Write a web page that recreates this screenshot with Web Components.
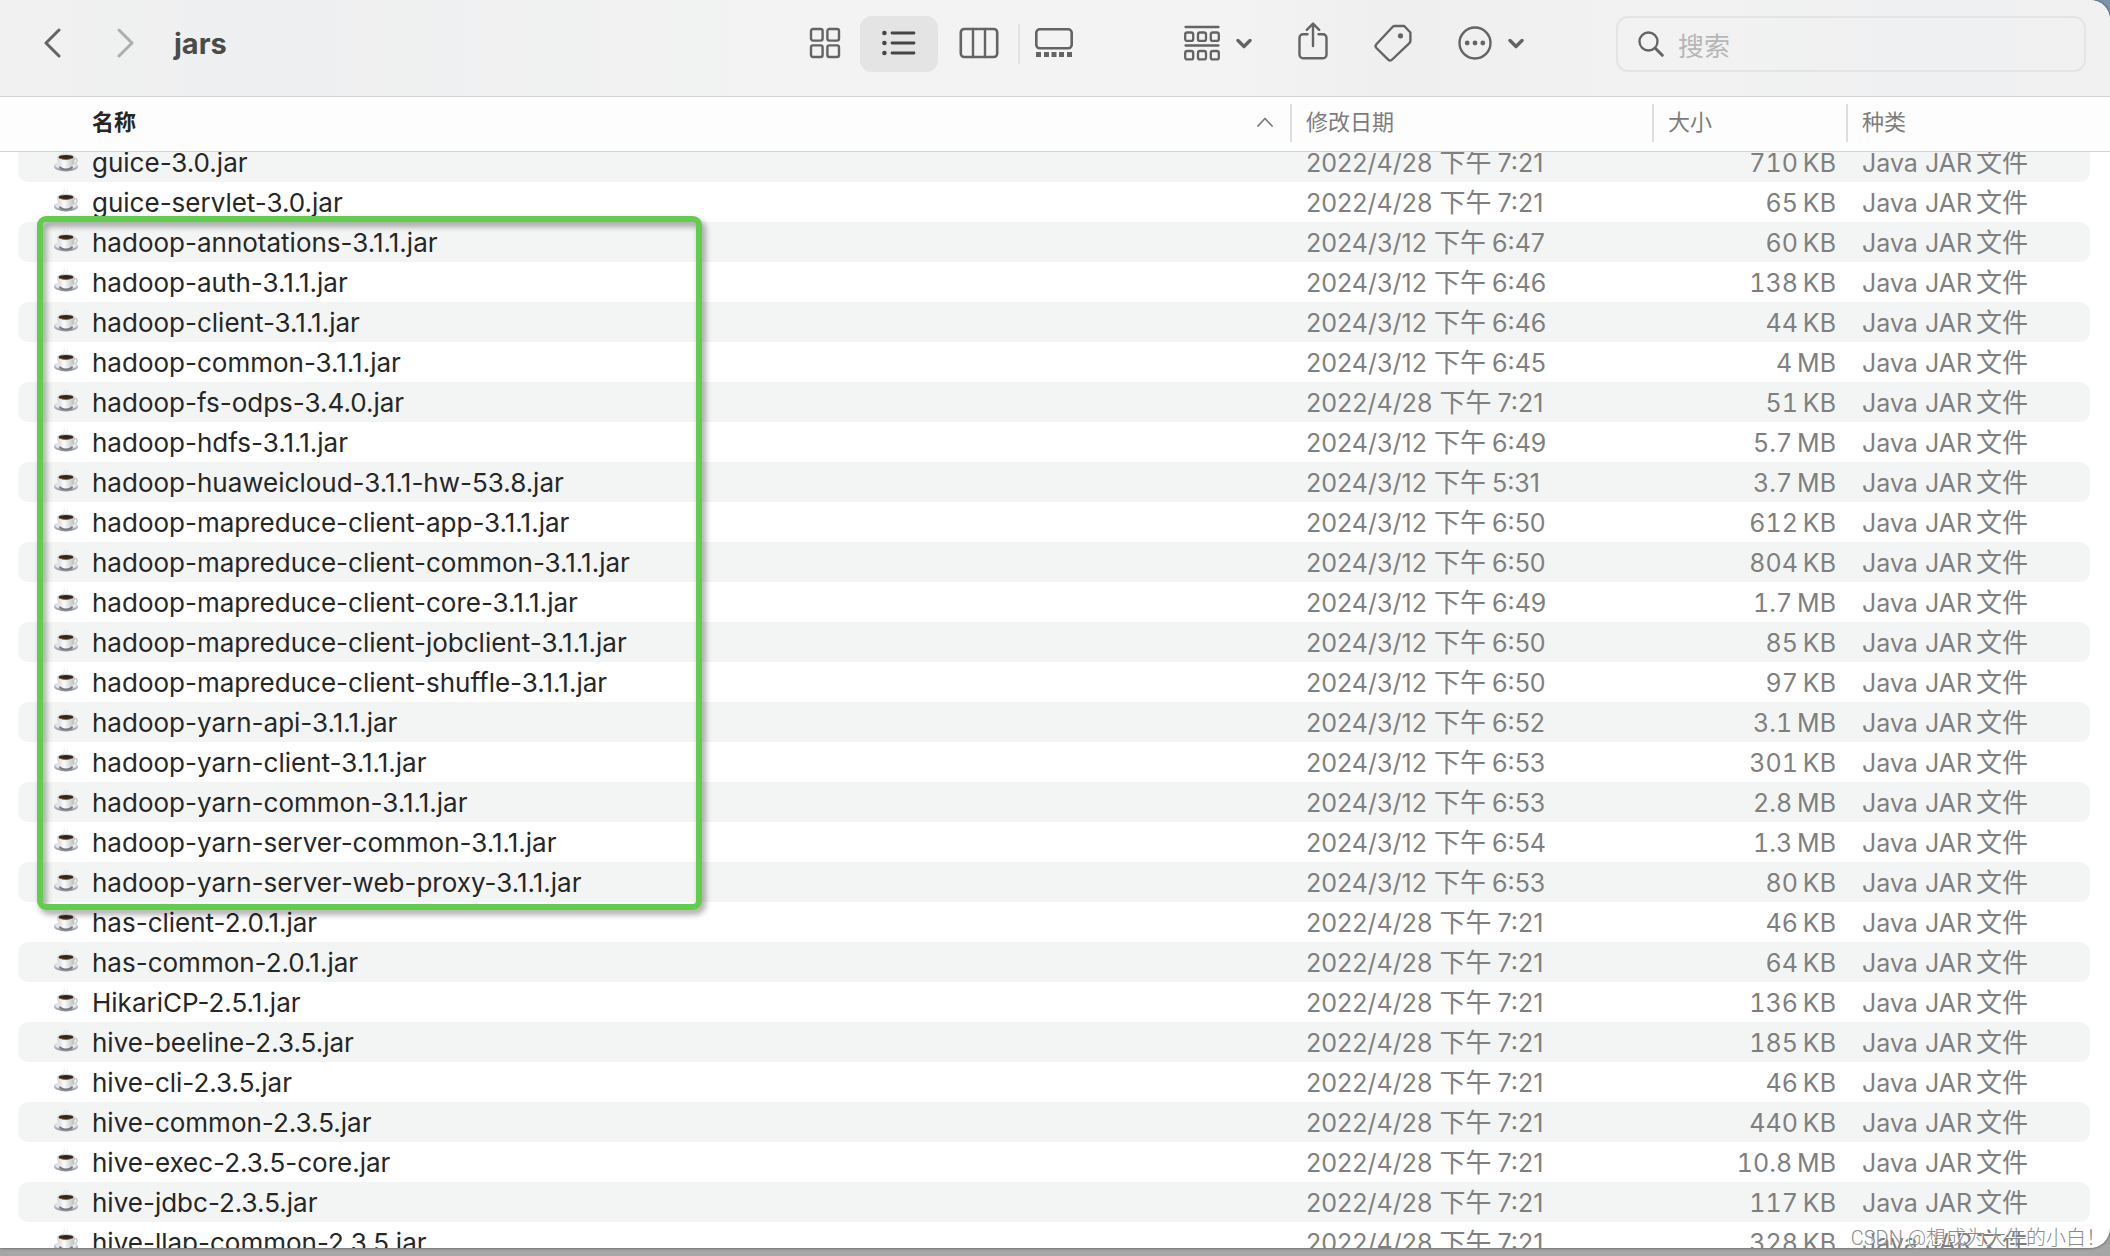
<!DOCTYPE html>
<html lang="zh-CN">
<head>
<meta charset="utf-8">
<title>jars</title>
<style>
  html, body { height: 100%; margin: 0; }
  body {
    background: linear-gradient(to bottom, #7a96a8 0 50%, #a6a6a6 50%);
    font-family: Inter, "Noto Sans CJK SC", sans-serif;
    overflow: hidden;
  }
</style>
</head>
<body>
<finder-window>
  <finder-toolbar slot="toolbar" heading="jars"></finder-toolbar>
  <file-list slot="content"></file-list>
  <page-watermark slot="overlay">CSDN @想成为大牛的小白！</page-watermark>
</finder-window>

<script>
const define = (name, html, setup) => {
  const template = document.createElement('template');
  template.innerHTML = html;
  customElements.define(name, class extends HTMLElement {
    connectedCallback() {
      if (this.shadowRoot) return;
      const root = this.attachShadow({ mode: 'open' });
      root.append(template.content.cloneNode(true));
      if (setup) setup(this, root);
    }
  });
};

define('finder-window', `
  <style>
    :host { display: flex; flex-direction: column; box-sizing: border-box; height: 100vh; padding-bottom: 8px; position: relative; }
    .window { flex: 1; min-height: 0; display: flex; flex-direction: column; background: #fff; border-radius: 0 20px 20px 0; overflow: hidden; box-shadow: 0 0 3px rgba(0,0,0,.6); }
    ::slotted([slot=content]) { flex: 1; min-height: 0; }
  </style>
  <div class="window"><slot name="toolbar"></slot><slot name="content"></slot></div>
  <slot name="overlay"></slot>`);

define('page-watermark', `
  <style>
    :host { position: absolute; right: 4px; bottom: 4px; font: 300 20px/28px Roboto, "Noto Sans CJK SC", sans-serif; color: #8c8c8c; text-shadow: -1px -1px 0 #fff; white-space: nowrap; }
  </style><slot></slot>`);

/* Toolbar glyphs, drawn in device pixels */
const GLYPHS = {
  back: [18, 30, '<path d="M16 2 3 15l13 13" stroke-width="3"/>'],
  forward: [18, 30, '<path d="M2 2l13 13L2 28" stroke-width="3"/>'],
  grid: [32, 32, '<g stroke-width="2.4"><rect x="2" y="2" width="11.6" height="11.6" rx="2"/><rect x="18.4" y="2" width="11.6" height="11.6" rx="2"/><rect x="2" y="18.4" width="11.6" height="11.6" rx="2"/><rect x="18.4" y="18.4" width="11.6" height="11.6" rx="2"/></g>'],
  list: [34, 26, '<g stroke-width="2.8"><path d="M10 3h22M10 13h22M10 23h22"/></g><g fill="currentColor" stroke="none"><circle cx="2.4" cy="3" r="2.3"/><circle cx="2.4" cy="13" r="2.3"/><circle cx="2.4" cy="23" r="2.3"/></g>'],
  columns: [40, 32, '<rect x="1.8" y="2" width="36.4" height="28" rx="3.5" stroke-width="2.6"/><path d="M14 2v28M26 2v28" stroke-width="2.4"/>'],
  gallery: [38, 30, '<rect x="1.3" y="1.3" width="35.4" height="19" rx="3.5" stroke-width="2.6"/><g fill="currentColor" stroke="none"><rect x="1" y="24" width="5" height="5"/><rect x="9" y="24" width="5" height="5"/><rect x="16.500" y="24" width="5" height="5"/><rect x="24" y="24" width="5" height="5"/><rect x="32" y="24" width="5" height="5"/></g>'],
  group: [36, 36, '<g stroke-width="2.3"><path d="M1.500 2h33M1.500 20.500h33"/><rect x="1.200" y="7.500" width="8" height="8.400" rx="2"/><rect x="14" y="7.500" width="8" height="8.400" rx="2"/><rect x="26.800" y="7.500" width="8" height="8.400" rx="2"/><rect x="1.200" y="26" width="8" height="8.400" rx="2"/><rect x="14" y="26" width="8" height="8.400" rx="2"/><rect x="26.800" y="26" width="8" height="8.400" rx="2"/></g>'],
  down: [16, 11, '<path d="M2 2.500l6 6 6-6" stroke-width="3.4"/>'],
  share: [30, 42, '<g stroke-width="2.400"><path d="M9.500 12.300H5a3.500 3.500 0 0 0-3.500 3.500v17A3.500 3.500 0 0 0 5 36.300h20a3.500 3.500 0 0 0 3.500-3.500v-17a3.500 3.500 0 0 0-3.500-3.500h-4.500M15 24V2M8.800 7.800 15 1.600l6.200 6.200"/></g>'],
  tag: [38, 38, '<path d="M20.500 2h9.700l6.200 6.500v8.300c0 1-.4 1.700-1 2.400L18.200 35.500c-1.400 1.400-2.700 1.400-4 .1L2.400 24c-1.300-1.400-1.300-2.400 0-3.700L18.500 3c.6-.6 1.200-1 2-1Z" stroke-width="2.400"/><circle cx="26.500" cy="11.800" r="2.600" fill="currentColor" stroke="none"/>'],
  more: [34, 34, '<circle cx="17" cy="17" r="15.500" stroke-width="2.400"/><g fill="currentColor" stroke="none"><circle cx="9.200" cy="17" r="2.400"/><circle cx="17" cy="17" r="2.400"/><circle cx="24.800" cy="17" r="2.400"/></g>'],
  search: [26, 26, '<circle cx="10.500" cy="10.500" r="9" stroke-width="2.300"/><path d="m17.300 17.300 7 7" stroke-width="3"/>'],
  up: [16, 10, '<path d="M1 9l7-7.500L15 9" stroke-width="1.800"/>'],
};
define('finder-glyph', `
  <style>:host { display: inline-flex; flex: none; } svg { display: block; }</style>
  <svg fill="none" stroke="currentColor" stroke-linecap="round" stroke-linejoin="round" aria-hidden="true"></svg>`,
  (host, root) => {
    const [w, h, body] = GLYPHS[host.getAttribute('name')];
    const svg = root.querySelector('svg');
    svg.setAttribute('width', w);
    svg.setAttribute('height', h);
    svg.setAttribute('viewBox', `0 0 ${w} ${h}`);
    svg.innerHTML = body;
  });

define('finder-toolbar', `
  <style>
    :host { display: flex; align-items: center; flex: none; box-sizing: border-box; height: 97px; padding: 0 24px 8px 34px; background: linear-gradient(90deg, #f1f1f1, #eeeff0 12%, #f3f3f3 40%, #f3f3f3 58%, #efefef 66%, #f2f2f2 78%, #eff0f1 92%, #f1f1f1); border-bottom: 1px solid #d2d2d2; color: #646464; }
    button { display: flex; align-items: center; justify-content: center; gap: 16px; box-sizing: border-box; height: 56px; margin: 0; padding: 0 0 2px; border: 0; border-radius: 12px; background: none; color: inherit; font: inherit; }
    .lead { flex: 1; display: flex; align-items: center; }
    .nav { display: flex; gap: 38px; }
    .nav button { width: 36px; }
    .nav button:disabled { color: #adadad; }
    h1 { margin: 0 0 0 30px; font-size: 29px; line-height: 40px; font-weight: 700; color: #4b4b4b; }
    .views { display: flex; align-items: center; }
    .views button { width: 78px; }
    .views button:first-child { width: 70px; }
    .views button:last-child { width: 68px; }
    .views [aria-pressed=true] { margin-right: 2px; background: #e4e4e4; color: #444; }
    .views i { width: 2px; height: 40px; background: #e3e3e3; }
    .actions { display: flex; align-items: center; gap: 46px; margin: 0 92px 0 96px; }
    label { box-sizing: border-box; display: flex; align-items: center; gap: 14px; width: 470px; height: 56px; padding: 0 20px; border: 2px solid #e4e4e4; border-radius: 12px; }
    input { flex: 1; min-width: 0; border: 0; padding: 6px 0 0; background: none; outline: 0; font: 26px/36px Inter, "Noto Sans CJK SC", sans-serif; color: #333; }
    input::placeholder { color: #b6b6b6; opacity: 1; }
  </style>
  <div class="lead">
    <div class="nav">
      <button aria-label="返回"><finder-glyph name="back"></finder-glyph></button>
      <button aria-label="前进" disabled><finder-glyph name="forward"></finder-glyph></button>
    </div>
    <h1></h1>
  </div>
  <div class="views">
    <button aria-label="图标"><finder-glyph name="grid"></finder-glyph></button>
    <button aria-label="列表" aria-pressed="true"><finder-glyph name="list"></finder-glyph></button>
    <button aria-label="分栏"><finder-glyph name="columns"></finder-glyph></button>
    <i></i>
    <button aria-label="画廊"><finder-glyph name="gallery"></finder-glyph></button>
  </div>
  <div class="actions">
    <button aria-label="群组"><finder-glyph name="group"></finder-glyph><finder-glyph name="down"></finder-glyph></button>
    <button aria-label="共享"><finder-glyph name="share"></finder-glyph></button>
    <button aria-label="标签"><finder-glyph name="tag"></finder-glyph></button>
    <button aria-label="更多"><finder-glyph name="more"></finder-glyph><finder-glyph name="down"></finder-glyph></button>
  </div>
  <label><finder-glyph name="search"></finder-glyph><input type="text" placeholder="搜索" aria-label="搜索"></label>`,
  (host, root) => { root.querySelector('h1').textContent = host.getAttribute('heading'); });

define('java-cup', `
  <style>:host { display: inline-flex; flex: none; } svg { display: block; }</style>
  <svg width="26" height="28" viewBox="0 0 26 28" aria-hidden="true">
    <defs>
      <linearGradient id="cup" x1="0" x2="1"><stop offset="0" stop-color="#d4d4d6"/><stop offset=".4" stop-color="#fbfbfb"/><stop offset="1" stop-color="#b9babd"/></linearGradient>
      <linearGradient id="dish" x1="0" x2="0" y1="0" y2="1"><stop offset="0" stop-color="#dfe1e5"/><stop offset="1" stop-color="#8d929b"/></linearGradient>
    </defs>
    <path d="M11 6c-2-2 1.500-3 0-6M14 6c-1.500-2 1-3 0-5" fill="none" stroke="#d9d9d9" stroke-opacity=".7"/>
    <ellipse cx="13" cy="17.500" rx="12" ry="5" fill="url(#dish)"/>
    <ellipse cx="13" cy="16.600" rx="10.800" ry="3.800" fill="#e4e5e8"/>
    <ellipse cx="13" cy="18.600" rx="7" ry="2.800" fill="#777c84"/>
    <path d="M20.500 9.500c5-1.200 5 5.500-1.500 5" fill="none" stroke="#c9cacd" stroke-width="1.600"/>
    <path d="M4 8c0 6 2.800 11.500 9 11.500S22 14 22 8Z" fill="url(#cup)"/>
    <ellipse cx="13" cy="8" rx="9" ry="3.200" fill="#d8d8da"/>
    <ellipse cx="13" cy="8.200" rx="7.400" ry="2.300" fill="#33241d"/>
    <path d="M7.500 9.300c3 1.500 8 1.500 11 0" fill="none" stroke="#8a5a35" stroke-width=".8"/>
  </svg>`);

/* name | date | time | size */
const FILES = `guice-3.0|2022/4/28|7:21|710 KB
guice-servlet-3.0|2022/4/28|7:21|65 KB
hadoop-annotations-3.1.1|2024/3/12|6:47|60 KB
hadoop-auth-3.1.1|2024/3/12|6:46|138 KB
hadoop-client-3.1.1|2024/3/12|6:46|44 KB
hadoop-common-3.1.1|2024/3/12|6:45|4 MB
hadoop-fs-odps-3.4.0|2022/4/28|7:21|51 KB
hadoop-hdfs-3.1.1|2024/3/12|6:49|5.7 MB
hadoop-huaweicloud-3.1.1-hw-53.8|2024/3/12|5:31|3.7 MB
hadoop-mapreduce-client-app-3.1.1|2024/3/12|6:50|612 KB
hadoop-mapreduce-client-common-3.1.1|2024/3/12|6:50|804 KB
hadoop-mapreduce-client-core-3.1.1|2024/3/12|6:49|1.7 MB
hadoop-mapreduce-client-jobclient-3.1.1|2024/3/12|6:50|85 KB
hadoop-mapreduce-client-shuffle-3.1.1|2024/3/12|6:50|97 KB
hadoop-yarn-api-3.1.1|2024/3/12|6:52|3.1 MB
hadoop-yarn-client-3.1.1|2024/3/12|6:53|301 KB
hadoop-yarn-common-3.1.1|2024/3/12|6:53|2.8 MB
hadoop-yarn-server-common-3.1.1|2024/3/12|6:54|1.3 MB
hadoop-yarn-server-web-proxy-3.1.1|2024/3/12|6:53|80 KB
has-client-2.0.1|2022/4/28|7:21|46 KB
has-common-2.0.1|2022/4/28|7:21|64 KB
HikariCP-2.5.1|2022/4/28|7:21|136 KB
hive-beeline-2.3.5|2022/4/28|7:21|185 KB
hive-cli-2.3.5|2022/4/28|7:21|46 KB
hive-common-2.3.5|2022/4/28|7:21|440 KB
hive-exec-2.3.5-core|2022/4/28|7:21|10.8 MB
hive-jdbc-2.3.5|2022/4/28|7:21|117 KB
hive-llap-common-2.3.5|2022/4/28|7:21|328 KB`.split('\n').map(line => line.split('|'));

define('file-list', `
  <style>
    :host { display: block; position: relative; overflow: hidden; }
    .scroll { height: 100%; overflow-y: auto; scrollbar-width: none; }
    .sheet { position: relative; }
    table { width: 100%; table-layout: fixed; border-collapse: separate; border-spacing: 0; font-size: 25px; line-height: 38px; color: #7f7f7f; }
    .date { width: 362px; } .size { width: 194px; } .kind { width: 264px; }
    th { position: sticky; top: 0; z-index: 2; box-sizing: border-box; height: 55px; padding: 7px 0 9px; background: #fdfdfd; border-bottom: 1px solid #d2d2d2; font-weight: 400; text-align: left; }
    th button { display: flex; align-items: center; justify-content: space-between; box-sizing: border-box; width: 100%; height: 38px; margin: 0; padding: 0 0 2px 14px; border: 0; border-left: 2px solid #dedede; background: none; font: 22px/32px Inter, "Noto Sans CJK SC", sans-serif; color: #7c7c7c; }
    th:first-child button { padding: 0 17px 2px 92px; border-left: 0; font-weight: 700; color: #262626; }
    th finder-glyph { color: #7c7c7c; }
    td { box-sizing: border-box; height: 40px; padding: 2px 0 0 16px; vertical-align: top; white-space: nowrap; background-clip: padding-box; }
    tbody tr:nth-child(odd) td { background-color: #f3f5f5; }
    td:first-child { padding-left: 35px; border-left: 18px solid transparent; border-radius: 28px 0 0 28px / 10px 0 0 10px; color: #262626; font-size: 26px; }
    td:last-child { border-right: 20px solid transparent; border-radius: 0 30px 30px 0 / 0 10px 10px 0; }
    td:nth-child(3) { padding: 2px 10px 0 0; text-align: right; font-variant-numeric: tabular-nums; }
    .name { display: flex; align-items: center; gap: 13px; height: 38px; }
    .cjk { font-size: 26px; line-height: 1; }
    .thin { font-size: 18px; line-height: 1; }
    .kind-gap { margin-left: 4px; }
    .time { margin-left: 6px; }
    .highlight { position: absolute; z-index: 1; left: 37px; top: 129px; width: 665px; height: 694px; box-sizing: border-box; border: 6px solid #62cc4c; border-radius: 9px; filter: drop-shadow(3px 4px 3px rgba(0,0,0,.4)); pointer-events: none; }
  </style>
  <div class="scroll"><div class="sheet">
    <table>
      <colgroup><col><col class="date"><col class="size"><col class="kind"></colgroup>
      <thead><tr>
        <th aria-sort="ascending"><button>名称<finder-glyph name="up"></finder-glyph></button></th>
        <th><button>修改日期</button></th><th><button>大小</button></th><th><button>种类</button></th>
      </tr></thead>
      <tbody></tbody>
    </table>
    <div class="highlight"></div>
  </div></div>`,
  (host, root) => {
    root.querySelector('tbody').innerHTML = FILES.map(([name, date, time, size]) => `
      <tr>
        <td><div class="name"><java-cup></java-cup><span>${name}.jar</span></div></td>
        <td>${date} <span class="cjk">下午</span><span class="time">${time}</span></td>
        <td>${size.replace(' ', '<span class="thin"> </span>')}</td>
        <td>Java JAR<span class="cjk kind-gap">文件</span></td>
      </tr>`).join('');
    root.querySelector('.scroll').scrollTop = 10;
  });
</script>
</body>
</html>
